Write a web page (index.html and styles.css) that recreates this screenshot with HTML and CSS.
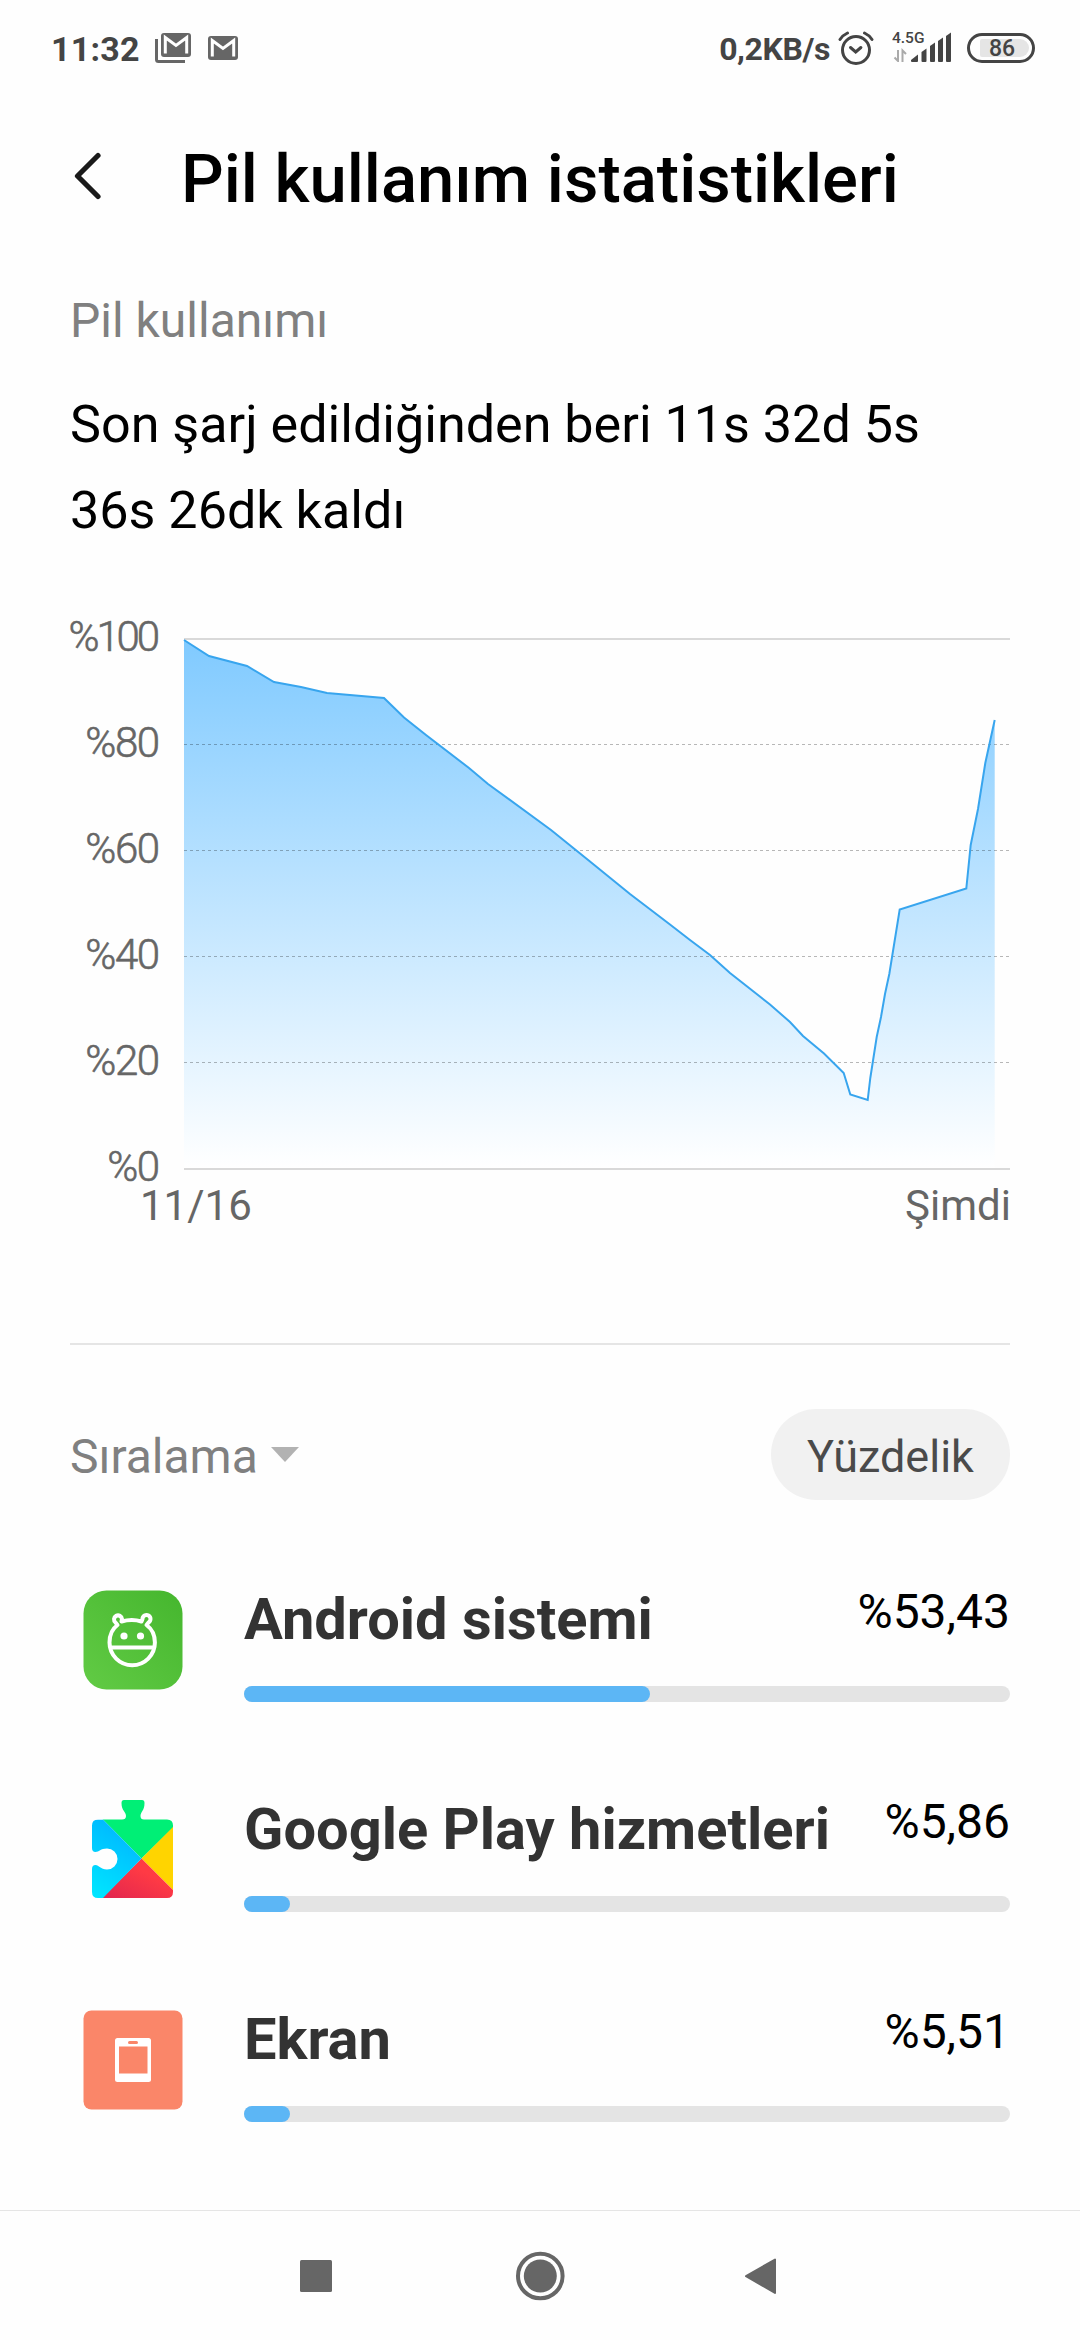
FILE: index.html
```html
<!DOCTYPE html>
<html lang="tr">
<head>
  <meta charset="UTF-8">
  <title>Pil kullanım istatistikleri</title>
  <link rel="stylesheet" href="styles.css">
</head>
<body>

  <!-- Durum çubuğu -->
  <div class="status">
    <span class="clock">11:32</span>
    <svg class="mail-stack" width="36" height="30" viewBox="0 0 36 30">
      <path d="M1.500 6v20.500a2 2 0 0 0 2 2H30" fill="none" stroke="#666" stroke-width="3"/>
      <rect x="6" y="0" width="30" height="24" rx="3" fill="#666"/>
      <path d="M10.300 20.500V4.500L21 12.500L31.700 4.500V20.500" fill="none" stroke="#fff" stroke-width="3"/>
    </svg>
    <svg class="mail" width="30" height="24" viewBox="0 0 30 24">
      <rect width="30" height="24" rx="3" fill="#666"/>
      <path d="M4.300 20.500V4.500L15 12.500L25.700 4.500V20.500" fill="none" stroke="#fff" stroke-width="3"/>
    </svg>

    <span class="speed">0,2KB/s</span>
    <svg class="alarm" width="36" height="36" viewBox="0 0 36 36" fill="none" stroke="#444" stroke-width="3" stroke-linecap="round">
      <circle cx="18" cy="20" r="13.500"/>
      <path d="M12.500 17.500l5.200 4.500l5.200-4.500"/>
      <path d="M2 9.500Q5 5 9.500 3M26.500 3Q31 5 34 9.500"/>
    </svg>
    <svg class="signal" width="60" height="32" viewBox="0 0 60 32">
      <text class="net" x="0" y="12.700">4.5G</text>
      <path d="M2.500 27.500L6 31V20M10.500 32V20.500L14 24" fill="none" stroke="#aaa" stroke-width="2"/>
      <g fill="#444">
        <path d="M19 31v-1l7-5.500V31q0 1-1 1h-5q-1 0-1-1z"/>
        <path d="M29.500 22l5-3.500V31q0 1-1 1h-3q-1 0-1-1z"/>
        <path d="M38 16l5-3.500V31q0 1-1 1h-3q-1 0-1-1z"/>
        <path d="M46 11l5-3.500V31q0 1-1 1h-3q-1 0-1-1z"/>
        <path d="M54 6l5-3.500V31q0 1-1 1h-3q-1 0-1-1z"/>
      </g>
    </svg>
    <div class="battery"><span class="level">86</span></div>
  </div>

  <!-- Başlık -->
  <div class="header">
    <svg class="back" width="28" height="48" viewBox="0 0 28 48">
      <path d="M24 3.500L3.500 24L24 44.500" fill="none" stroke="#1a1a1a" stroke-width="5.200" stroke-linecap="round" stroke-linejoin="round"/>
    </svg>
    <h1>Pil kullanım istatistikleri</h1>
  </div>

  <div class="content">
    <h2>Pil kullanımı</h2>
    <p class="summary">Son şarj edildiğinden beri 11s 32d 5s<br>36s 26dk kaldı</p>

    <!-- Pil grafiği -->
    <svg class="chart" width="940" height="620" viewBox="70 620 940 620">
      <defs>
        <linearGradient id="fill" gradientUnits="userSpaceOnUse" x1="0" y1="640" x2="0" y2="1168">
          <stop offset="0" stop-color="#80caff"/>
          <stop offset="1" stop-color="#ffffff"/>
        </linearGradient>
      </defs>
      <path fill="#d9d9d9" d="M184 638h826v2H184zM184 1168h826v2H184z"/>
      <path fill="url(#fill)" d="M184 640L209 656L247 666L274 682L301 687L327 693L384 698L404 717.500L426 735L469 768L488 784L551 830L590 861.500L630 894L670 924.500L690 940L710 955L730 973L770 1004.500L790 1022L803 1036L824 1053.500L843.700 1073L850.300 1094.500L867.700 1100L870.300 1078L876.700 1037L881 1017L885 994L889.300 974L899.700 909.500L966.300 888.500L970.700 845L978 809L985.300 763L994.700 720V1168H184z"/>
      <path class="grid" d="M184 744.500H1010M184 850.500H1010M184 956.500H1010M184 1062.500H1010"/>
      <path class="line" d="M184 640L209 656L247 666L274 682L301 687L327 693L384 698L404 717.500L426 735L469 768L488 784L551 830L590 861.500L630 894L670 924.500L690 940L710 955L730 973L770 1004.500L790 1022L803 1036L824 1053.500L843.700 1073L850.300 1094.500L867.700 1100L870.300 1078L876.700 1037L881 1017L885 994L889.300 974L899.700 909.500L966.300 888.500L970.700 845L978 809L985.300 763L994.700 720"/>
      <g class="percent">
        <text class="full" x="157" y="650.500">%100</text>
        <text x="158.500" y="756.500">%80</text>
        <text x="158.500" y="862.500">%60</text>
        <text x="158.500" y="968.500">%40</text>
        <text x="158.500" y="1074.500">%20</text>
        <text x="158.500" y="1180.500">%0</text>
      </g>
      <text class="time" x="140" y="1220">11/16</text>
      <text class="time end" x="1011" y="1220">Şimdi</text>
    </svg>

    <div class="toolbar">
      <span class="sort">Sıralama</span>
      <svg class="caret" width="28" height="15" viewBox="0 0 28 15"><path d="M0 0h28L14 15z" fill="#b2b2b2"/></svg>
      <button class="mode">Yüzdelik</button>
    </div>

    <!-- Uygulama listesi -->
    <div class="app">
      <svg class="icon" width="100" height="100" viewBox="0 0 100 100">
        <defs>
          <linearGradient id="green" x1="0" y1="1" x2="1" y2="0">
            <stop offset="0" stop-color="#62cb45"/>
            <stop offset="1" stop-color="#45b62e"/>
          </linearGradient>
        </defs>
        <rect x=".5" y=".5" width="99" height="99" rx="23" fill="url(#green)"/>
        <g fill="none" stroke="#fff" stroke-width="4">
          <path d="M38.500 31.500L39 29A4 4 0 1 0 32.500 32.500L34.500 35C29 39 26.500 45.500 26.500 52.500A22.700 22.700 0 0 0 71.900 52.500C71.900 45.500 69 39 63.500 35L65.500 32.500A4 4 0 1 0 59.500 29L58.500 31.500Q49 28.500 38.500 31.500z" stroke-linejoin="round"/>
          <path d="M28 57.500h43"/>
        </g>
        <circle cx="41" cy="46" r="3.600" fill="#fff"/>
        <circle cx="57.500" cy="46" r="3.600" fill="#fff"/>
      </svg>
      <div class="info">
        <div class="row"><span class="name">Android sistemi</span><span class="value">%53,43</span></div>
        <div class="bar"><div class="used" style="width: 406px"></div></div>
      </div>
    </div>

    <div class="app">
      <svg class="icon" width="100" height="100" viewBox="0 0 100 100">
        <defs>
          <clipPath id="puzzle">
            <path d="M41 0H59Q61.500 0 61.500 3C61.500 11 57.500 11.500 57.500 16Q57.500 19.500 61 19.500H84Q90 19.500 90 25.500V92Q90 98 84 98H15Q9 98 9 92V69Q9 65 12.500 65C16 65 17.500 69.500 24 69.500A10.500 10.500 0 0 0 24 48.500C17.500 48.500 16 52 12.500 52Q9 52 9 48V25.500Q9 19.500 15 19.500H39Q43 19.500 43 16C43 11.500 38.500 11 38.500 3Q38.500 0 41 0z"/>
          </clipPath>
          <linearGradient id="blue" x1="0" y1="1" x2=".4" y2="0">
            <stop offset="0" stop-color="#00e8ff"/>
            <stop offset="1" stop-color="#00b8ff"/>
          </linearGradient>
          <linearGradient id="red" x1="0" y1="1" x2="1" y2="0">
            <stop offset="0" stop-color="#df2450"/>
            <stop offset=".6" stop-color="#ff3a44"/>
          </linearGradient>
        </defs>
        <g clip-path="url(#puzzle)">
          <path d="M0 0H100V18L58.500 58.500L20 19.500z" fill="#00ef76"/>
          <path d="M100 17L58.500 58.500L100 100z" fill="#ffd400"/>
          <path d="M58.500 58.500L19 98V100H100z" fill="url(#red)"/>
          <path d="M9 19.500H20L58.500 58.500L20 98H9z" fill="url(#blue)"/>
        </g>
      </svg>
      <div class="info">
        <div class="row"><span class="name">Google Play hizmetleri</span><span class="value">%5,86</span></div>
        <div class="bar"><div class="used" style="width: 46px"></div></div>
      </div>
    </div>

    <div class="app">
      <svg class="icon" width="100" height="100" viewBox="0 0 100 100">
        <rect x=".5" y=".5" width="99" height="99" rx="8" fill="#fa8669"/>
        <rect x="32" y="28" width="36" height="44" rx="2.500" fill="#fff"/>
        <rect x="36" y="36.500" width="28.500" height="27" fill="#fa8669"/>
        <rect x="45" y="31" width="10" height="3" rx="1.500" fill="#fa8669"/>
      </svg>
      <div class="info">
        <div class="row"><span class="name">Ekran</span><span class="value">%5,51</span></div>
        <div class="bar"><div class="used" style="width: 46px"></div></div>
      </div>
    </div>
  </div>

  <!-- Gezinme çubuğu -->
  <div class="nav">
    <svg width="50" height="50" viewBox="0 0 50 50"><rect x="9" y="9" width="32" height="32" rx="1.500" fill="#666"/></svg>
    <svg width="50" height="50" viewBox="0 0 50 50">
      <circle cx="25.300" cy="25" r="22.300" fill="none" stroke="#666" stroke-width="4"/>
      <circle cx="25.300" cy="25" r="16.500" fill="#666"/>
    </svg>
    <svg width="50" height="50" viewBox="0 0 50 50"><path d="M7 25.200L36 8.500V42z" fill="#666" stroke="#666" stroke-width="2" stroke-linejoin="round"/></svg>
  </div>

</body>
</html>
```
FILE: styles.css
```css
* {
  box-sizing: border-box;
}

body {
  margin: 0;
  width: 1080px;
  height: 2340px;
  background: #fefefe;
  color: #000;
  font-family: Roboto, sans-serif;
  display: flex;
  flex-direction: column;
  overflow: hidden;
}

svg {
  display: block;
  flex: none;
}

.status {
  height: 96px;
  flex: none;
  display: flex;
  align-items: center;
  padding: 0 45px 0 51px;
  color: #444;
}

.clock {
  font-size: 34px;
  font-weight: 700;
  padding-top: 2px;
  width: 104px;
  letter-spacing: 0.2px;
}

.mail {
  margin-left: 17px;
}

.speed {
  margin-left: auto;
  font-size: 32px;
  font-weight: 700;
  padding-top: 2px;
  letter-spacing: -0.4px;
}

.alarm {
  margin-left: 8px;
}

.signal {
  margin: 0 15px 4px 18px;
}

.net {
  font-size: 15.5px;
  font-weight: 500;
  fill: #444;
}

.battery {
  width: 68px;
  height: 30px;
  border: 3px solid #444;
  border-radius: 15px;
  padding: 3px 4px 3px 10px;
}

.level {
  display: block;
  width: 49px;
  height: 18px;
  line-height: 19px;
  border-radius: 2px 9px 9px 2px;
  background: #e5e5e5;
  font-size: 23px;
  font-weight: 500;
  padding-left: 9px;
}

.header {
  height: 166px;
  flex: none;
  display: flex;
  align-items: center;
  padding-left: 74px;
}

.back {
  margin-bottom: 6px;
}

h1 {
  margin: 0 0 0 79px;
  font-size: 67px;
  font-weight: 500;
  line-height: 80px;
}

.content {
  flex: 1;
  min-height: 0;
  padding: 29px 70px 0;
}

h2 {
  margin: 0;
  font-size: 48px;
  font-weight: 400;
  line-height: 60px;
  color: #808080;
}

.summary {
  margin: 31px 0 0;
  font-size: 52.1px;
  line-height: 86px;
}

.chart {
  margin-top: 66px;
  overflow: visible;
}

.grid {
  stroke: #000;
  stroke-opacity: 0.28;
  stroke-width: 1;
  stroke-dasharray: 3 3;
}

.line {
  fill: none;
  stroke: #38a5ee;
  stroke-width: 2;
}

.percent {
  font-size: 42px;
  font-weight: 300;
  fill: #666;
  stroke: #666;
  stroke-width: 0.6px;
  text-anchor: end;
  letter-spacing: -1.5px;
}

.full {
  letter-spacing: -3.1px;
}

.time {
  font-size: 42px;
  fill: #666;
}

.end {
  text-anchor: end;
}

.toolbar {
  height: 260px;
  margin-top: 103px;
  border-top: 2px solid #e5e5e5;
  display: flex;
  align-items: flex-start;
  padding-top: 64px;
}

.sort {
  font-size: 48px;
  line-height: 91px;
  padding-top: 2px;
  color: #808080;
}

.caret {
  margin: 38px 0 0 13px;
}

.mode {
  margin-left: auto;
  width: 239px;
  height: 91px;
  border: none;
  border-radius: 46px;
  background: #f1f1f1;
  color: #4a4a4a;
  font-family: Roboto, sans-serif;
  font-size: 45px;
  line-height: 87px;
  padding: 4px 0 0;
}

.app {
  height: 210px;
  display: flex;
}

.icon {
  margin: -13px 61px 0 13px;
}

.info {
  flex: 1;
}

.row {
  height: 83px;
  display: flex;
  justify-content: space-between;
}

.name {
  font-size: 57.8px;
  font-weight: 700;
  line-height: 70px;
  margin-top: -19px;
  color: #333;
}

.value {
  font-size: 48px;
  line-height: 60px;
  margin-top: -21px;
}

.bar {
  height: 16px;
  border-radius: 8px;
  background: #e4e4e4;
}

.used {
  height: 16px;
  border-radius: 8px;
  background: #5cb6f5;
}

.nav {
  height: 130px;
  flex: none;
  border-top: 1px solid #e5e5e5;
  display: flex;
  justify-content: center;
  align-items: center;
  gap: 174px;
}
```
